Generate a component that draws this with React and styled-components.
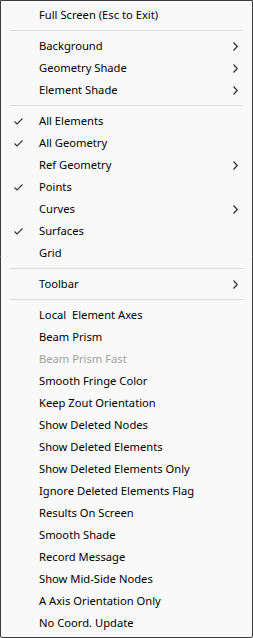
import styled, { createGlobalStyle } from "styled-components";

const Global = createGlobalStyle`
  html, body { margin: 0; padding: 0; background: #ffffff; }
  #root { width: 253px; height: 638px; }
`;

const sections = [
  [{ label: "Full Screen (Esc to Exit)" }],
  [
    { label: "Background", sub: true },
    { label: "Geometry Shade", sub: true },
    { label: "Element Shade", sub: true },
  ],
  [
    { label: "All Elements", checked: true },
    { label: "All Geometry", checked: true },
    { label: "Ref Geometry", sub: true },
    { label: "Points", checked: true },
    { label: "Curves", sub: true },
    { label: "Surfaces", checked: true },
    { label: "Grid" },
  ],
  [{ label: "Toolbar", sub: true }],
  [
    { label: "Local  Element Axes" },
    { label: "Beam Prism" },
    { label: "Beam Prism Fast", disabled: true },
    { label: "Smooth Fringe Color" },
    { label: "Keep Zout Orientation" },
    { label: "Show Deleted Nodes" },
    { label: "Show Deleted Elements" },
    { label: "Show Deleted Elements Only" },
    { label: "Ignore Deleted Elements Flag" },
    { label: "Results On Screen" },
    { label: "Smooth Shade" },
    { label: "Record Message" },
    { label: "Show Mid-Side Nodes" },
    { label: "A Axis Orientation Only" },
    { label: "No Coord. Update" },
  ],
];

const Check = () => (
  <svg width="9" height="7" viewBox="0 0 9 7">
    <path d="M0.5 3.5 L3 6 L8.5 0.5" fill="none" stroke="#333" strokeWidth="1.1" />
  </svg>
);

const Chevron = () => (
  <svg width="5" height="9" viewBox="0 0 5 9">
    <path d="M0.5 0.5 L4.3 4.5 L0.5 8.5" fill="none" stroke="#222" strokeWidth="1.1" />
  </svg>
);

export default function App() {
  return (
    <>
      <Global />
      <Menu>
        {sections.map((items, i) => (
          <div key={i}>
            {i > 0 && <Separator />}
            {items.map((it) => (
              <Item key={it.label} $disabled={it.disabled}>
                <Mark>{it.checked && <Check />}</Mark>
                <Label>{it.label}</Label>
                <Arrow>{it.sub && <Chevron />}</Arrow>
              </Item>
            ))}
          </div>
        ))}
      </Menu>
    </>
  );
}

const Menu = styled.div`
  box-sizing: border-box;
  width: 253px;
  height: 638px;
  background: #f9f9f9;
  border: 1px solid #3c3c3c;
  border-radius: 0 0 2px 2px;
  padding: 3px 0;
  font-family: "Noto Sans", "Open Sans", sans-serif;
  font-size: 11.2px;
`;

const Item = styled.div`
  height: 22px;
  display: flex;
  align-items: center;
  color: ${(p) => (p.$disabled ? "#a0a0a0" : "#000000")};
`;

const Mark = styled.span`
  width: 38px;
  display: flex;
  padding-left: 13px;
  box-sizing: border-box;
`;

const Label = styled.span`
  flex: 1;
  white-space: pre;
  padding-bottom: 1px;
`;

const Arrow = styled.span`
  width: 19px;
  display: flex;
`;

const Separator = styled.div`
  height: 1px;
  background: #dcdcdc;
  margin: 4px 9px 4px 9px;
`;
